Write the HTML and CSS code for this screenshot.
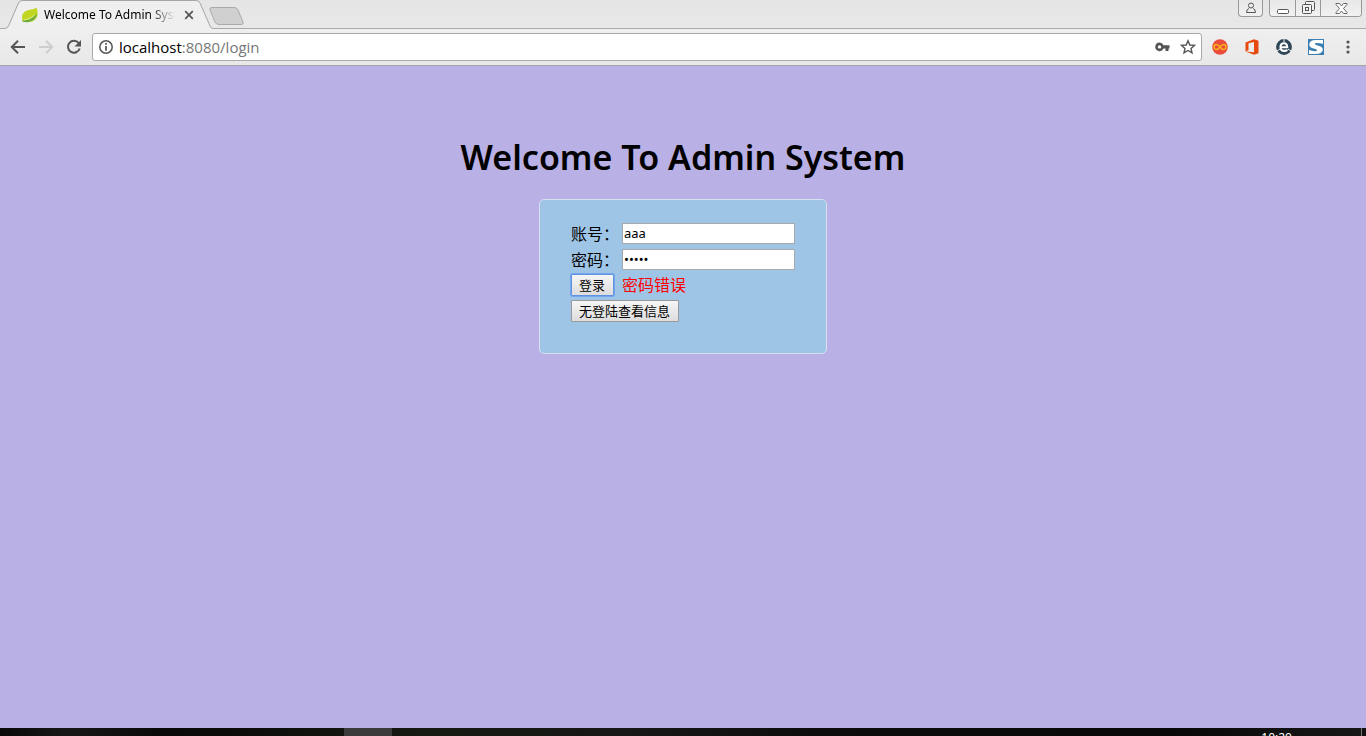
FILE: index.html
```html
<!DOCTYPE html>
<html lang="zh-CN">
<head>
<meta charset="utf-8">
<title>Welcome To Admin System</title>
<link rel="stylesheet" href="styles.css">
</head>
<body>
<header class="browser">
  <div class="strip">
    <div class="tab">
      <svg class="tab-shape" width="208" height="29" viewBox="0 0 208 29"><path d="M0 28.5H1Q3 28 4 25L13 4Q14 .5 17 .5H191Q194 .5 195 3L205 26Q206 28.500 208 28.500V29H0Z" fill="#efefef"/><path d="M0 28.500Q3 28 4 25L13 4Q14 .5 17 .5H191Q194 .5 195 3L205 26Q206 28.500 208 28.500" fill="none" stroke="#a5a5a5"/></svg>
      <svg class="leaf" width="18" height="16" viewBox="0 0 18 16"><path d="M15.500 .5C13 3 8 2 4 4.500C.5 7 .5 11 2 14.500C7 16 13 15 15.500 11C17 8 17 4 15.500 .5Z" fill="#c0d51f"/><path d="M1 13.500C7 14 12.500 11 16 6.500C15.500 12.500 9 16.500 2 14.700Z" fill="#6cab45"/><path d="M3 12.300C8 11.800 11.500 10 14.500 6.500C12 11 8 12.600 3 12.900Z" fill="#e4ee9b"/></svg>
      <span class="tab-title">Welcome To Admin System</span>
      <button class="plain close" aria-label="Close tab"><svg width="10" height="10" viewBox="0 0 10 10"><path d="M1.200 1.200L8.800 8.800M8.800 1.200L1.200 8.800" stroke="#555" stroke-width="1.700"/></svg></button>
    </div>
    <button class="plain new-tab" aria-label="New tab"><svg width="36" height="18" viewBox="0 0 36 18"><path d="M3 .5H25Q28 .5 29 3L34 15Q35 17.500 32 17.500H10Q7 17.500 6 15L1 3Q0 .5 3 .5Z" fill="#d0d0d0" stroke="#aaa"/></svg></button>
    <div class="window-tools">
      <button class="win user" aria-label="Profile"><svg width="12" height="12" viewBox="0 0 12 12" fill="none" stroke="#555"><circle cx="6" cy="3.500" r="2.500"/><path d="M4 6.500Q1.500 7 1.500 10.500H10.500Q10.500 7 8 6.500"/></svg></button>
      <div class="win-group">
        <button class="win" aria-label="Minimize"><svg width="14" height="14" viewBox="0 0 14 14"><rect x="1.500" y="8.500" width="11" height="4" rx="1" fill="#fff" stroke="#555"/></svg></button>
        <button class="win" aria-label="Restore"><svg width="14" height="14" viewBox="0 0 14 14" fill="#f2f2f2" stroke="#555"><rect x="4.500" y=".5" width="9" height="9" rx="1"/><rect x="1.500" y="3.500" width="9" height="9" rx="1"/><rect x="4.500" y="6.500" width="3" height="3"/></svg></button>
        <button class="win wide" aria-label="Close"><svg width="13" height="11" viewBox="0 0 13 11"><path d="M1 .5H4.500L6.500 3L8.500 .5H12V1.500L8.500 5.500L12 9.500V10.500H8.500L6.500 8L4.500 10.500H1V9.500L4.500 5.500L1 1.500Z" fill="#fff" stroke="#666"/></svg></button>
      </div>
    </div>
  </div>
  <nav class="toolbar" aria-label="Browser toolbar">
    <button class="plain tool" aria-label="Back"><svg width="16" height="14" viewBox="0 0 16 14" fill="none" stroke="#555" stroke-width="2"><path d="M15 7H2M8 .8L1.800 7L8 13.200"/></svg></button>
    <button class="plain tool" aria-label="Forward" disabled><svg width="16" height="14" viewBox="0 0 16 14" fill="none" stroke="#cecece" stroke-width="2"><path d="M1 7H14M8 .8L14.200 7L8 13.200"/></svg></button>
    <button class="plain tool" aria-label="Reload"><svg width="16" height="16" viewBox="0 0 16 16"><path d="M12.700 4A6 6 0 1 0 13.700 9.500" fill="none" stroke="#555" stroke-width="2"/><path d="M15 1V7.500H8.500Z" fill="#555"/></svg></button>
    <div class="address">
      <svg width="14" height="14" viewBox="0 0 14 14"><circle cx="7" cy="7" r="6.200" fill="none" stroke="#555" stroke-width="1.500"/><path d="M7 6V10.800M7 3V4.800" stroke="#555" stroke-width="1.700"/></svg>
      <span class="url">localhost<span class="path">:8080/login</span></span>
      <svg class="key" width="15" height="10" viewBox="0 0 15 10"><path d="M4.500 .5A4.300 4.300 0 1 0 8.500 6.500H10.500V9H13.500V6.500H14.500V3.200H8.500A4.300 4.300 0 0 0 4.500 .5ZM4.500 3.200A1.700 1.700 0 1 1 4.500 6.600A1.700 1.700 0 1 1 4.500 3.200Z" fill="#555" fill-rule="evenodd"/></svg>
      <svg width="16" height="16" viewBox="0 0 16 16"><path d="M8 1.800L9.800 6L14.400 6.400L11 9.400L12 13.900L8 11.500L4 13.900L5 9.400L1.600 6.400L6.200 6Z" fill="none" stroke="#555" stroke-width="1.400"/></svg>
    </div>
    <div class="extensions">
      <svg width="16" height="16" viewBox="0 0 16 16"><circle cx="8" cy="8" r="7.800" fill="#eb4b3d"/><path d="M8 8C6.500 6 5.700 5.500 4.500 5.500A2.500 2.500 0 0 0 4.500 10.500C5.700 10.500 6.500 10 8 8C9.500 6 10.300 5.500 11.500 5.500A2.500 2.500 0 0 1 11.500 10.500C10.300 10.500 9.500 10 8 8Z" fill="none" stroke="#f9b51b" stroke-width="1.400"/></svg>
      <svg width="16" height="16" viewBox="0 0 16 16"><path d="M1.500 3.500L10 .2L14.500 1.700V14.300L10 15.800L1.500 12.500L10 13.300V3L4.500 4.300V11.300L1.500 12.500Z" fill="#e64a0d"/></svg>
      <svg width="16" height="16" viewBox="0 0 16 16"><circle cx="8" cy="8" r="7.900" fill="#2d4657"/><path d="M4.700 8.300H11.200Q11.200 4.300 8 4.300Q4.500 4.300 4.500 8.200Q4.500 11.900 8.200 11.900Q10 11.900 11.400 10.800" fill="none" stroke="#fff" stroke-width="2.100"/><path d="M8 0V3M1 12L4 10M12 10L15 12" stroke="#eef2f4"/></svg>
      <svg width="16" height="16" viewBox="0 0 16 16"><rect width="16" height="16" fill="#3b7fb2"/><path d="M15 1V5Q11 3.500 7.500 4Q6 5 8 6L12 7.200Q15.500 8.500 14.500 12Q12.500 15.500 7 15H1V11Q5 12.500 8.500 12Q10 11 7.500 10L4 9Q.5 7.500 1.500 4Q3 .7 8 1Z" fill="#fff"/></svg>
      <button class="plain menu" aria-label="Menu"><svg width="4" height="14" viewBox="0 0 4 14" fill="#555"><circle cx="2" cy="2" r="1.600"/><circle cx="2" cy="7" r="1.600"/><circle cx="2" cy="12" r="1.600"/></svg></button>
    </div>
  </nav>
</header>
<main class="page">
  <h1 class="heading">Welcome To Admin System</h1>
  <form class="card" onsubmit="return false">
    <label for="account">账号<span class="colon">：</span></label><input class="field" id="account" type="text" value="aaa">
    <label for="password">密码<span class="colon">：</span></label><input class="field" id="password" type="password" value="aaaaa">
    <button class="btn focused" type="submit">登录</button><span class="error" role="alert">密码错误</span>
    <button class="btn guest" type="button">无登陆查看信息</button>
  </form>
</main>
<footer class="taskbar"><span class="task"></span><time class="clock">10:20</time><span class="desktop"></span></footer>
</body>
</html>
```
FILE: styles.css
```css
* { box-sizing: border-box; }
body {
  margin: 0;
  min-height: 100vh;
  display: flex;
  flex-direction: column;
  background: #b9b0e5;
  color: #000;
  font: 16px/20px "Noto Sans", "Noto Sans CJK SC", sans-serif;
}
svg { display: block; flex: none; }
button, input { font-family: inherit; }
.plain { border: 0; padding: 0; background: none; }

.browser { border-bottom: 1px solid #a5a5a5; background: #ebebeb; }
.strip {
  display: flex;
  height: 29px;
  padding: 0 4px 0 5px;
  background: linear-gradient(#e5e5e5, #e8e8e8);
  box-shadow: inset 0 -1px #a9a9a9;
}
.tab {
  position: relative;
  display: flex;
  align-items: center;
  width: 208px;
  padding: 1px 19px 0 16px;
  gap: 5px;
}
.tab-shape { position: absolute; left: 0; top: 0; }
.leaf, .close { position: relative; }
.tab-title {
  position: relative;
  flex: 1;
  overflow: hidden;
  white-space: nowrap;
  font-size: 12px;
  mask-image: linear-gradient(to right, #000 80%, transparent);
}
.close { margin-left: 4px; }
.new-tab { align-self: flex-start; padding-top: 7px; margin-left: -4px; }
.window-tools { display: flex; align-items: flex-start; gap: 6px; margin-left: auto; }
.win {
  display: flex;
  align-items: center;
  justify-content: center;
  width: 25px;
  height: 16px;
  padding: 0;
  border: 0;
  background: linear-gradient(#e8e8e8, #f1f1f1);
}
.win + .win { border-left: 1px solid #999; }
.win + .wide { width: 41px; }
.user, .win-group { border: 1px solid #999; border-top: 0; border-radius: 0 0 4px 4px; }
.user { height: 17px; }
.win-group { display: flex; overflow: hidden; }

.toolbar { display: flex; align-items: center; height: 36px; padding: 0 10px 0 4px; background: linear-gradient(#efefef, #e8e8e8); }
.tool { display: flex; align-items: center; justify-content: center; width: 28px; height: 28px; }
.address {
  flex: 1;
  display: flex;
  align-items: center;
  height: 28px;
  margin: 0 10px 0 4px;
  padding: 0 5px 0 6px;
  border: 1px solid #a9a9a9;
  border-radius: 3px;
  background: #fff;
}
.url { flex: 1; margin-left: 6px; font: 15px/20px "Open Sans", sans-serif; }
.path { color: #777; }
.key { margin-right: 10px; }
.extensions { display: flex; align-items: center; gap: 16px; }
.menu { width: 16px; display: flex; justify-content: center; }

.page { flex: 1; display: flex; flex-direction: column; align-items: center; padding-top: 66px; }
.heading { margin: 0; font: 600 34px/50px "Noto Sans", sans-serif; }
.card {
  display: grid;
  grid-template-columns: 47px 173px;
  grid-auto-rows: 22px;
  align-items: center;
  gap: 4px;
  margin-top: 17px;
  padding: 22px 31px 31px;
  border: 1px solid #d8dfef;
  border-radius: 5px;
  background: #9fc5e6;
  white-space: nowrap;
}
.colon { font-family: "Noto Sans CJK TC", sans-serif; }
.field {
  width: 100%;
  height: 21px;
  padding: 0 1px;
  border: 1px solid #a9a9a9;
  background: #fff;
  color: #000;
  font-size: 13px;
}
.btn {
  justify-self: start;
  height: 22px;
  padding: 0 8px 0 7px;
  border: 1px solid #999;
  border-radius: 1px;
  background: linear-gradient(#f6f6f6, #ddd);
  color: #000;
  font-size: 13px;
  line-height: 20px;
}
.focused { border-color: #5f93e0; outline: 1px solid #77a5ee; }
.guest { grid-column: 1 / -1; }
.error { color: #f00; }

.taskbar {
  display: flex;
  align-items: flex-start;
  height: 8px;
  overflow: hidden;
  background: linear-gradient(to right, #090909, #171717 5%, #080808 12%, #161a12 32%, #171717 46%, #0c0c0c 60%, #080808 86%, #171717);
}
.task { width: 48px; height: 8px; margin-left: 25.2%; background: #3b3b3b; }
.clock { margin: 2px 69px 0 auto; color: #fff; font-size: 12px; line-height: 16px; }
.desktop { width: 5px; height: 8px; border-left: 1px solid #777; background: #111; }
```
